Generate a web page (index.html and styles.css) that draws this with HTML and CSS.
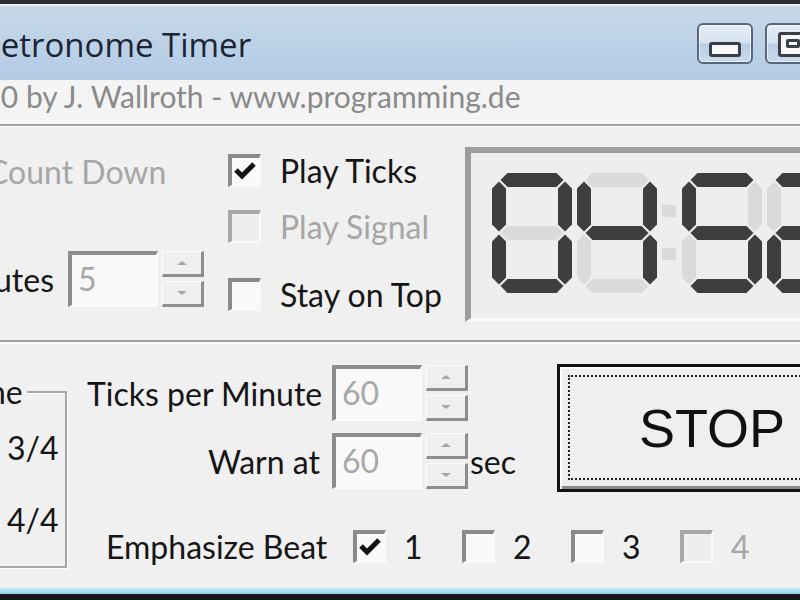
FILE: index.html
```html
<!DOCTYPE html>
<html lang="de">
<head>
  <meta charset="UTF-8" />
  <title>Metronome Timer</title>
  <link rel="stylesheet" href="styles.css">
</head>
<body>
  <div class="window">

    <!-- Titelleiste -->
    <div class="titlebar">
      <span class="title">Metronome Timer</span>
      <div class="caption-buttons">
        <span class="cap-btn"><span class="glyph-min"></span></span>
        <span class="cap-btn"><span class="glyph-max"><span></span></span></span>
      </div>
    </div>
    <div class="credits">&copy; 2010 by J. Wallroth - www.programming.de</div>
    <div class="sep"></div>

    <!-- Optionen + Anzeige -->
    <section class="upper">
      <div class="timer-opts">
        <label class="check disabled countdown"><span class="box"></span>Count Down</label>
        <div class="field minutes">
          <span class="field-label">Minutes</span>
          <span class="edit">5</span>
          <span class="spin"><span class="spin-up"></span><span class="spin-down"></span></span>
        </div>
      </div>

      <div class="sound-opts">
        <label class="check"><span class="box"><svg class="tick" viewBox="0 0 27 27"><path d="M4 12 L10 18 L22 6"/></svg></span>Play Ticks</label>
        <label class="check disabled"><span class="box"></span>Play Signal</label>
        <label class="check stay"><span class="box"></span>Stay on Top</label>
      </div>

      <div class="lcd">
        <svg width="410" height="165" viewBox="0 0 410 165">
          <defs>
            <polygon id="seg-a" points="8.5,7 15.5,0 64.5,0 71.5,7 64.5,14 15.5,14"/>
            <polygon id="seg-b" points="73,8.5 80,15.5 80,51.5 73,58.5 66,51.5 66,15.5"/>
            <polygon id="seg-c" points="73,61.5 80,68.5 80,104.5 73,111.5 66,104.5 66,68.5"/>
            <polygon id="seg-d" points="8.5,113 15.5,106 64.5,106 71.5,113 64.5,120 15.5,120"/>
            <polygon id="seg-e" points="7,61.5 14,68.5 14,104.5 7,111.5 0,104.5 0,68.5"/>
            <polygon id="seg-f" points="7,8.5 14,15.5 14,51.5 7,58.5 0,51.5 0,15.5"/>
            <polygon id="seg-g" points="8.5,60 15.5,53 64.5,53 71.5,60 64.5,67 15.5,67"/>
          </defs>
          <!-- 0 -->
          <g transform="translate(21 20)">
            <use href="#seg-a" class="on"/><use href="#seg-b" class="on"/><use href="#seg-c" class="on"/>
            <use href="#seg-d" class="on"/><use href="#seg-e" class="on"/><use href="#seg-f" class="on"/>
            <use href="#seg-g"/>
          </g>
          <!-- 4 -->
          <g transform="translate(106 20)">
            <use href="#seg-a"/><use href="#seg-b" class="on"/><use href="#seg-c" class="on"/>
            <use href="#seg-d"/><use href="#seg-e"/><use href="#seg-f" class="on"/>
            <use href="#seg-g" class="on"/>
          </g>
          <rect class="colon" x="191" y="52" width="14" height="12"/>
          <rect class="colon" x="191" y="95" width="14" height="12"/>
          <!-- 5 -->
          <g transform="translate(211 20)">
            <use href="#seg-a" class="on"/><use href="#seg-b"/><use href="#seg-c" class="on"/>
            <use href="#seg-d" class="on"/><use href="#seg-e"/><use href="#seg-f" class="on"/>
            <use href="#seg-g" class="on"/>
          </g>
          <!-- 2 -->
          <g transform="translate(296 20)">
            <use href="#seg-a" class="on"/><use href="#seg-b" class="on"/><use href="#seg-c"/>
            <use href="#seg-d" class="on"/><use href="#seg-e" class="on"/><use href="#seg-f"/>
            <use href="#seg-g" class="on"/>
          </g>
        </svg>
      </div>
    </section>
    <div class="sep sep-lower"></div>

    <!-- Takt, Tempo, Start/Stop -->
    <section class="lower">
      <fieldset class="group">
        <legend>Time</legend>
        <label class="radio"><span class="dot"></span>3/4</label>
        <label class="radio"><span class="dot on"></span>4/4</label>
      </fieldset>

      <div class="lower-main">
        <div class="lower-top">
          <div class="fields">
            <div class="field">
              <span class="field-label">Ticks per Minute</span>
              <span class="edit">60</span>
              <span class="spin"><span class="spin-up"></span><span class="spin-down"></span></span>
            </div>
            <div class="field warn">
              <span class="field-label">Warn at</span>
              <span class="edit">60</span>
              <span class="spin"><span class="spin-up"></span><span class="spin-down"></span></span>
              <span class="unit">sec</span>
            </div>
          </div>
          <button class="stop"><span>STOP</span></button>
        </div>

        <div class="beats">
          <span class="beats-label">Emphasize Beat</span>
          <label class="check beat"><span class="box"><svg class="tick" viewBox="0 0 27 27"><path d="M4 12 L10 18 L22 6"/></svg></span>1</label>
          <label class="check beat"><span class="box"></span>2</label>
          <label class="check beat"><span class="box"></span>3</label>
          <label class="check beat disabled"><span class="box"></span>4</label>
        </div>
      </div>
    </section>
    <div class="frame-bottom"></div>
  </div>
</body>
</html>
```

FILE: styles.css
```css
* {
  box-sizing: border-box;
}
html, body {
  margin: 0;
  padding: 0;
}
body {
  width: 800px;
  height: 600px;
  overflow: hidden;
  background: #f0f0f0;
  font-family: Lato, "DejaVu Sans", sans-serif;
  font-size: 32px;
  color: #151515;
}
.window {
  height: 600px;
  display: flex;
  flex-direction: column;
  border-top: 4px solid #2f2f2f;
  border-bottom: 6px solid #161616;
}

/* Titelleiste */
.titlebar {
  flex: none;
  height: 76px;
  display: flex;
  align-items: flex-start;
  border-top: 2px solid #e7eef6;
  background: linear-gradient(#c8d8e8, #bdd2e7 50%, #b2cbe5);
}
.title {
  font-family: "Open Sans", sans-serif;
  font-size: 33px;
  line-height: 45px;
  margin: 16px 0 0 -29px;
  color: #1b2433;
  white-space: nowrap;
}
.caption-buttons {
  display: flex;
  gap: 12px;
  margin: 17px -21px 0 auto;
}
.cap-btn {
  width: 56px;
  height: 41px;
  display: flex;
  align-items: flex-end;
  justify-content: center;
  padding-bottom: 5px;
  border: 2px solid #56687f;
  border-radius: 6px;
  background: linear-gradient(#e6eef7, #d5e2ef 48%, #b9cee4 52%, #c9dbed);
  box-shadow: inset 0 0 0 1px rgba(255, 255, 255, 0.6);
}
.glyph-min {
  width: 32px;
  height: 15px;
  border: 3px solid #3a3f47;
  border-radius: 3px;
  background: #f5f7fa;
}
.glyph-max {
  width: 30px;
  height: 25px;
  padding: 4px 0 0 5px;
  border: 3px solid #3a3f47;
  border-radius: 3px;
  background: #f5f7fa;
}
.glyph-max span {
  display: block;
  width: 14px;
  height: 9px;
  border: 3px solid #3a3f47;
  border-radius: 2px;
}

.credits {
  flex: none;
  height: 44px;
  font-size: 30px;
  line-height: 32px;
  text-indent: -84px;
  white-space: nowrap;
  background: #f4f4f4;
  color: #8a8a8a;
}
.sep {
  flex: none;
  height: 3px;
  border-top: 2px solid #a3a3a3;
  border-bottom: 1px solid #fcfcfc;
}
.sep-lower {
  height: 4px;
  border-bottom-width: 2px;
}

/* Checkboxen */
.check {
  display: flex;
  align-items: center;
  gap: 19px;
  height: 33px;
  white-space: nowrap;
}
.box {
  flex: none;
  width: 33px;
  height: 33px;
  border-style: solid;
  border-width: 4px 2px 2px 4px;
  border-color: #8a8a8a #fafafa #fafafa #8a8a8a;
  background: #fafafa;
}
.check.disabled {
  color: #a6a6a6;
}
.check.disabled .box {
  background: #eeeeee;
  border-color: #a8a8a8 #fafafa #fafafa #a8a8a8;
}
.tick {
  display: block;
  width: 27px;
  height: 27px;
}
.tick path {
  fill: none;
  stroke: #111;
  stroke-width: 5;
}

/* Eingabefelder mit Auf/Ab */
.field {
  display: flex;
  align-items: center;
  white-space: nowrap;
}
.field-label {
  flex: none;
  text-align: right;
}
.edit {
  flex: none;
  width: 90px;
  height: 56px;
  padding-left: 6px;
  line-height: 48px;
  border-style: solid;
  border-width: 4px 2px 2px 4px;
  border-color: #8c8c8c #fbfbfb #fbfbfb #8c8c8c;
  background: #f9f9f9;
  color: #a8a8a8;
}
.spin {
  flex: none;
  display: flex;
  flex-direction: column;
  gap: 4px;
  width: 42px;
  height: 56px;
  margin-left: 4px;
}
.spin-up, .spin-down {
  flex: 1;
  display: flex;
  align-items: center;
  justify-content: center;
  border-style: solid;
  border-width: 1px 3px 3px 1px;
  border-color: #fdfdfd #8e8e8e #8e8e8e #fdfdfd;
  background: #efefef;
}
.spin-up::before, .spin-down::before {
  content: "";
  border-left: 5px solid transparent;
  border-right: 5px solid transparent;
}
.spin-up::before {
  border-bottom: 4px solid #a6a6a6;
}
.spin-down::before {
  border-top: 4px solid #a6a6a6;
}

/* obere Hälfte */
.upper {
  flex: none;
  height: 213px;
  display: flex;
  align-items: flex-start;
}
.timer-opts {
  flex: none;
  width: 265px;
  margin: 28px 24px 0 -61px;
}
.countdown {
  margin-left: -4px;
}
.minutes {
  margin-top: 63px;
}
.minutes .field-label {
  width: 109px;
}
.minutes .edit {
  margin-left: 20px;
}
.sound-opts {
  flex: none;
  width: 237px;
  margin-top: 27px;
  display: flex;
  flex-direction: column;
  gap: 23px;
}
.sound-opts .stay {
  margin-top: 12px;
}

/* LCD-Anzeige */
.lcd {
  flex: none;
  width: 420px;
  height: 175px;
  margin-top: 20px;
  border-style: solid;
  border-width: 6px 4px 4px 6px;
  border-color: #9d9d9d #fafafa #fafafa #9d9d9d;
  background: #eeeeee;
}
.lcd svg {
  display: block;
}
.lcd use, .lcd .colon {
  fill: #dadada;
}
.lcd use.on {
  fill: #3e3e3e;
}

/* untere Hälfte */
.lower {
  flex: none;
  height: 244px;
  display: flex;
  align-items: flex-start;
}
.group {
  flex: none;
  width: 180px;
  min-width: 0;
  height: 194px;
  margin: 30px 0 0 -113px;
  padding: 0;
  border: 2px solid #a7a7a7;
  box-shadow: 1px 1px 0 #fff, inset 1px 1px 0 #fff;
}
.group legend {
  margin-left: 60px;
  padding: 0 4px;
  line-height: 36px;
}
.radio {
  display: flex;
  align-items: center;
  gap: 14px;
  height: 36px;
  margin: 19px 0 0 78px;
}
.radio + .radio {
  margin-top: 36px;
}
.dot {
  width: 26px;
  height: 26px;
  border-radius: 50%;
  border: 3px solid #8a8a8a;
  background: #fafafa;
}
.dot.on {
  background: radial-gradient(#111 35%, #fafafa 40%);
}

.lower-main {
  flex: none;
  margin-left: 20px;
}
.lower-top {
  display: flex;
  align-items: flex-start;
  margin-top: 21px;
}
.fields {
  flex: none;
  width: 470px;
}
.fields .field-label {
  width: 233px;
}
.fields .edit {
  margin-left: 12px;
}
.warn {
  margin-top: 12px;
}
.unit {
  margin-left: 2px;
}
.stop {
  flex: none;
  width: 310px;
  height: 128px;
  margin-top: -1px;
  padding: 8px 8px 9px 8px;
  font-family: "Liberation Sans", Arial, sans-serif;
  font-size: 54px;
  color: #111;
  background: #efefef;
  border: 3px solid #121212;
  box-shadow: inset 2px 2px 0 #fff, inset -3px -3px 0 #8a8a8a;
}
.stop span {
  display: flex;
  align-items: center;
  justify-content: center;
  height: 100%;
  border: 2px dotted #222;
}
.beats {
  display: flex;
  align-items: center;
  height: 33px;
  margin-top: 38px;
  padding-left: 19px;
}
.beats-label {
  flex: none;
  width: 247px;
  white-space: nowrap;
}
.beat {
  flex: none;
  width: 109px;
  gap: 18px;
}

.frame-bottom {
  flex: none;
  height: 6px;
  background: linear-gradient(#c6ecf8, #8fd0e8);
}
```
